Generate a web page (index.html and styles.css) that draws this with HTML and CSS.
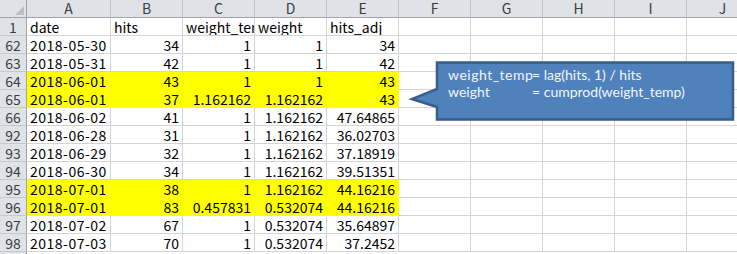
FILE: index.html
```html
<!DOCTYPE html>
<html>
<head>
<meta charset="utf-8">
<link rel="stylesheet" href="styles.css">
</head>
<body>
<div class="sheet">
  <div class="corner"><span class="tri"></span></div>
  <div class="ch">A</div><div class="ch">B</div><div class="ch">C</div><div class="ch">D</div><div class="ch">E</div><div class="ch">F</div><div class="ch">G</div><div class="ch">H</div><div class="ch">I</div><div class="ch">J</div>

  <div class="rh">1</div><div class="c">date</div><div class="c">hits</div><div class="c">weight_temp</div><div class="c">weight</div><div class="c">hits_adj</div><div class="c"></div><div class="c"></div><div class="c"></div><div class="c"></div><div class="c"></div>

  <div class="rh">62</div><div class="c d">2018-05-30</div><div class="c n">34</div><div class="c n">1</div><div class="c n">1</div><div class="c n">34</div><div class="c"></div><div class="c"></div><div class="c"></div><div class="c"></div><div class="c"></div>

  <div class="rh">63</div><div class="c d">2018-05-31</div><div class="c n">42</div><div class="c n">1</div><div class="c n">1</div><div class="c n">42</div><div class="c"></div><div class="c"></div><div class="c"></div><div class="c"></div><div class="c"></div>

  <div class="rh">64</div><div class="c d y">2018-06-01</div><div class="c n y">43</div><div class="c n y">1</div><div class="c n y">1</div><div class="c n y">43</div><div class="c"></div><div class="c"></div><div class="c"></div><div class="c"></div><div class="c"></div>

  <div class="rh">65</div><div class="c d y">2018-06-01</div><div class="c n y">37</div><div class="c n y">1.162162</div><div class="c n y">1.162162</div><div class="c n y">43</div><div class="c"></div><div class="c"></div><div class="c"></div><div class="c"></div><div class="c"></div>

  <div class="rh">66</div><div class="c d">2018-06-02</div><div class="c n">41</div><div class="c n">1</div><div class="c n">1.162162</div><div class="c n">47.64865</div><div class="c"></div><div class="c"></div><div class="c"></div><div class="c"></div><div class="c"></div>

  <div class="rh">92</div><div class="c d">2018-06-28</div><div class="c n">31</div><div class="c n">1</div><div class="c n">1.162162</div><div class="c n">36.02703</div><div class="c"></div><div class="c"></div><div class="c"></div><div class="c"></div><div class="c"></div>

  <div class="rh">93</div><div class="c d">2018-06-29</div><div class="c n">32</div><div class="c n">1</div><div class="c n">1.162162</div><div class="c n">37.18919</div><div class="c"></div><div class="c"></div><div class="c"></div><div class="c"></div><div class="c"></div>

  <div class="rh">94</div><div class="c d">2018-06-30</div><div class="c n">34</div><div class="c n">1</div><div class="c n">1.162162</div><div class="c n">39.51351</div><div class="c"></div><div class="c"></div><div class="c"></div><div class="c"></div><div class="c"></div>

  <div class="rh">95</div><div class="c d y">2018-07-01</div><div class="c n y">38</div><div class="c n y">1</div><div class="c n y">1.162162</div><div class="c n y">44.16216</div><div class="c"></div><div class="c"></div><div class="c"></div><div class="c"></div><div class="c"></div>

  <div class="rh">96</div><div class="c d y">2018-07-01</div><div class="c n y">83</div><div class="c n y">0.457831</div><div class="c n y">0.532074</div><div class="c n y">44.16216</div><div class="c"></div><div class="c"></div><div class="c"></div><div class="c"></div><div class="c"></div>

  <div class="rh">97</div><div class="c d">2018-07-02</div><div class="c n">67</div><div class="c n">1</div><div class="c n">0.532074</div><div class="c n">35.64897</div><div class="c"></div><div class="c"></div><div class="c"></div><div class="c"></div><div class="c"></div>

  <div class="rh">98</div><div class="c d">2018-07-03</div><div class="c n">70</div><div class="c n">1</div><div class="c n">0.532074</div><div class="c n">37.2452</div><div class="c"></div><div class="c"></div><div class="c"></div><div class="c"></div><div class="c"></div>
</div>

<div class="callout">
  <svg class="shape" width="329" height="66" viewBox="0 0 329 66">
    <path d="M29 4.5 H325 V61.5 H29 V49 L4 41 L29 31 Z" fill="#4f81bd" stroke="#385d8a" stroke-width="2.5" stroke-linejoin="miter"/>
  </svg>
  <div class="ctext">
    <div class="cl"><span class="lbl wide">weight_temp</span>= lag(hits, 1) / hits</div>
    <div class="cl"><span class="lbl">weight</span>= cumprod(weight_temp)</div>
  </div>
</div>
</body>
</html>
```

FILE: styles.css
```css
html, body {
  margin: 0;
  padding: 0;
  background: #ffffff;
  overflow: hidden;
}
body {
  width: 737px;
  height: 254px;
  position: relative;
}
.sheet {
  display: grid;
  grid-template-columns: 27px 84px repeat(9, 72px);
  grid-auto-rows: 18px;
  width: 759px;
  height: 254px;
  overflow: hidden;
  background: linear-gradient(to right, #dfe3e8 26px, #9fa4aa 26px, #9fa4aa 27px, #ffffff 27px);
  font-family: "Noto Sans CJK JP", "Noto Sans", sans-serif;
  font-size: 14px;
  color: #000;
}
.sheet > div {
  box-sizing: border-box;
  overflow: hidden;
  white-space: nowrap;
}
.corner {
  background: #dfe3e8;
  border-right: 1px solid #9fa4aa;
  border-bottom: 1px solid #9fa4aa;
  position: relative;
}
.tri {
  position: absolute;
  right: 2px;
  bottom: 2px;
  width: 0;
  height: 0;
  border-left: 9px solid transparent;
  border-bottom: 9px solid #b9bec4;
}
.ch {
  background: #dfe3e8;
  border-right: 1px solid #bfc4ca;
  border-bottom: 1px solid #9fa4aa;
  color: #3c3c3c;
  display: flex;
  justify-content: center;
  align-items: flex-end;
  line-height: 16px;
  padding-bottom: 1px;
}
.rh {
  background: #dfe3e8;
  border-right: 1px solid #9fa4aa;
  border-bottom: 1px solid #c4c9cf;
  color: #3c3c3c;
  display: flex;
  justify-content: center;
  align-items: flex-end;
  line-height: 16px;
}
.c {
  border-right: 1px solid #d4d4d4;
  border-bottom: 1px solid #d4d4d4;
  display: flex;
  align-items: flex-end;
  line-height: 16px;
  padding: 0 3px;
}
.n {
  justify-content: flex-end;
}
.d {
  letter-spacing: 0.5px;
}
.y {
  background: #ffff00;
  border-color: #ffff00;
}
.callout {
  position: absolute;
  left: 408px;
  top: 58px;
  width: 329px;
  height: 66px;
}
.shape {
  position: absolute;
  left: 0;
  top: 0;
  display: block;
}
.ctext {
  position: relative;
  padding: 8px 0 0 40px;
  font-family: Lato, "Open Sans", sans-serif;
  font-size: 14px;
  line-height: 17px;
  color: #f4f6fa;
}
.cl {
  white-space: nowrap;
}
.lbl {
  display: inline-block;
  width: 84px;
}
.wide {
  letter-spacing: 0.5px;
}
```
